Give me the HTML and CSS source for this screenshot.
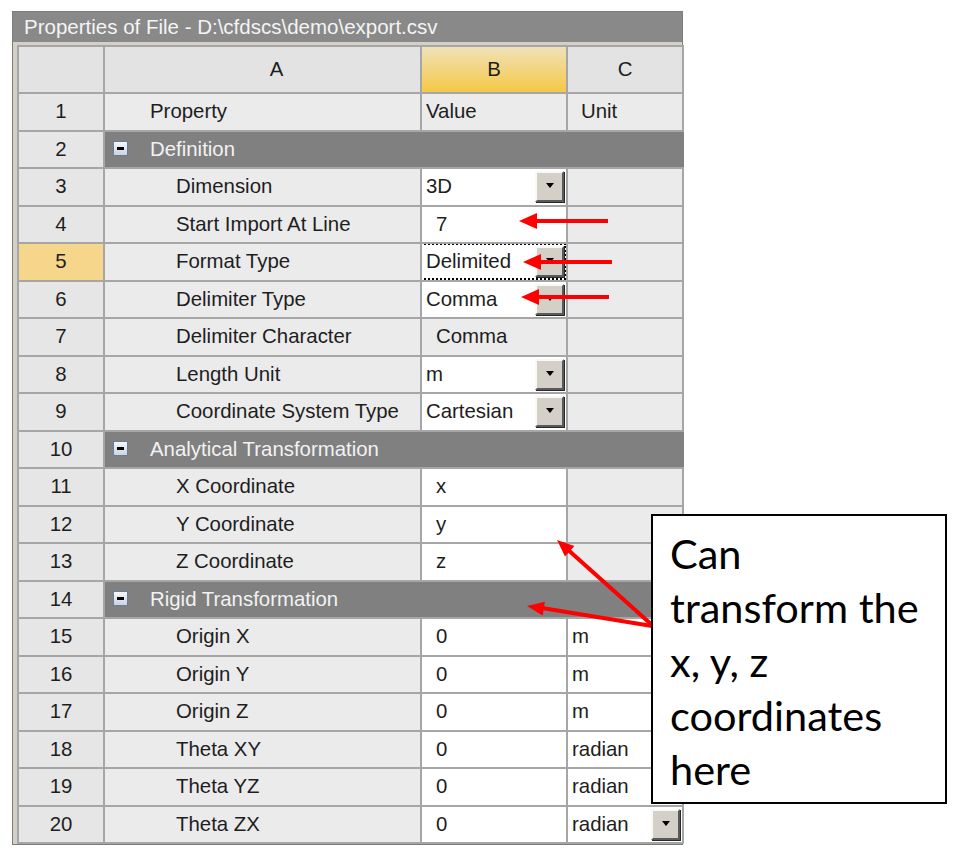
FILE: index.html
```html
<!DOCTYPE html>
<html lang="en">
<head>
  <meta charset="UTF-8">
  <title>Properties of File</title>
  <link rel="stylesheet" href="styles.css">
</head>
<body>

  <div class="window">
    <div class="titlebar">Properties of File - D:\cfdscs\demo\export.csv</div>
    <div class="sheet">
      <table class="grid">
        <colgroup>
          <col class="c-num">
          <col class="c-a">
          <col class="c-b">
          <col class="c-c">
        </colgroup>
        <tr class="head">
          <td class="num"></td>
          <td class="hd col-a">A</td>
          <td class="hd sel">B</td>
          <td class="hd">C</td>
        </tr>
        <tr>
          <td class="num">1</td>
          <td class="prop top">Property</td>
          <td class="ro"><div class="val">Value</div></td>
          <td class="ro"><div class="unit pad">Unit</div></td>
        </tr>
        <tr class="group">
          <td class="num">2</td>
          <td colspan="3" class="grp"><span class="minus"></span>Definition</td>
        </tr>
        <tr>
          <td class="num">3</td>
          <td class="prop">Dimension</td>
          <td class="edit"><div class="val">3D<span class="dd"></span></div></td>
          <td class="ro"></td>
        </tr>
        <tr>
          <td class="num">4</td>
          <td class="prop">Start Import At Line</td>
          <td class="edit"><div class="val txt">7</div></td>
          <td class="ro"></td>
        </tr>
        <tr>
          <td class="num active">5</td>
          <td class="prop">Format Type</td>
          <td class="edit"><div class="val focus">Delimited<span class="dd"></span></div></td>
          <td class="ro"></td>
        </tr>
        <tr>
          <td class="num">6</td>
          <td class="prop">Delimiter Type</td>
          <td class="edit"><div class="val">Comma<span class="dd"></span></div></td>
          <td class="ro"></td>
        </tr>
        <tr>
          <td class="num">7</td>
          <td class="prop">Delimiter Character</td>
          <td class="ro"><div class="val txt">Comma</div></td>
          <td class="ro"></td>
        </tr>
        <tr>
          <td class="num">8</td>
          <td class="prop">Length Unit</td>
          <td class="edit"><div class="val">m<span class="dd"></span></div></td>
          <td class="ro"></td>
        </tr>
        <tr>
          <td class="num">9</td>
          <td class="prop">Coordinate System Type</td>
          <td class="edit"><div class="val">Cartesian<span class="dd"></span></div></td>
          <td class="ro"></td>
        </tr>
        <tr class="group">
          <td class="num">10</td>
          <td colspan="3" class="grp"><span class="minus"></span>Analytical Transformation</td>
        </tr>
        <tr>
          <td class="num">11</td>
          <td class="prop">X Coordinate</td>
          <td class="edit"><div class="val txt">x</div></td>
          <td class="ro"></td>
        </tr>
        <tr>
          <td class="num">12</td>
          <td class="prop">Y Coordinate</td>
          <td class="edit"><div class="val txt">y</div></td>
          <td class="ro"></td>
        </tr>
        <tr>
          <td class="num">13</td>
          <td class="prop">Z Coordinate</td>
          <td class="edit"><div class="val txt">z</div></td>
          <td class="ro"></td>
        </tr>
        <tr class="group">
          <td class="num">14</td>
          <td colspan="3" class="grp"><span class="minus"></span>Rigid Transformation</td>
        </tr>
        <tr>
          <td class="num">15</td>
          <td class="prop">Origin X</td>
          <td class="edit"><div class="val txt">0</div></td>
          <td class="edit"><div class="unit">m<span class="dd"></span></div></td>
        </tr>
        <tr>
          <td class="num">16</td>
          <td class="prop">Origin Y</td>
          <td class="edit"><div class="val txt">0</div></td>
          <td class="edit"><div class="unit">m<span class="dd"></span></div></td>
        </tr>
        <tr>
          <td class="num">17</td>
          <td class="prop">Origin Z</td>
          <td class="edit"><div class="val txt">0</div></td>
          <td class="edit"><div class="unit">m<span class="dd"></span></div></td>
        </tr>
        <tr>
          <td class="num">18</td>
          <td class="prop">Theta XY</td>
          <td class="edit"><div class="val txt">0</div></td>
          <td class="edit"><div class="unit">radian<span class="dd"></span></div></td>
        </tr>
        <tr>
          <td class="num">19</td>
          <td class="prop">Theta YZ</td>
          <td class="edit"><div class="val txt">0</div></td>
          <td class="edit"><div class="unit">radian<span class="dd"></span></div></td>
        </tr>
        <tr>
          <td class="num">20</td>
          <td class="prop">Theta ZX</td>
          <td class="edit"><div class="val txt">0</div></td>
          <td class="edit"><div class="unit">radian<span class="dd"></span></div></td>
        </tr>
      </table>
    </div>
  </div>

  <svg class="arrows" width="958" height="861" viewBox="0 0 958 861">
    <g stroke="#ff0000" stroke-width="4" fill="none">
      <line x1="608" y1="221" x2="532" y2="221"/>
      <line x1="612" y1="262" x2="536" y2="262"/>
      <line x1="609" y1="297" x2="534" y2="297"/>
      <line x1="652" y1="625" x2="566" y2="548"/>
      <line x1="652" y1="626" x2="542" y2="608"/>
    </g>
    <g fill="#ff0000">
      <polygon points="519,221 537,213 537,229"/>
      <polygon points="523,262 541,254 541,270"/>
      <polygon points="521,297 539,289 539,305"/>
      <polygon points="557,540 565,556.5 574.4,546.1"/>
      <polygon points="527,606 542.7,615.6 544.9,601.8"/>
    </g>
  </svg>

  <div class="callout">Can<br>transform the<br>x, y, z<br>coordinates<br>here</div>

</body>
</html>
```

FILE: styles.css
```css
body {
  margin: 0;
  background-color: #fff;
  font-family: 'Liberation Sans', Arial, sans-serif;
  color: #1e1e1e;
}

.window {
  margin: 11px 0 0 12px;
  width: 669px;
  border: 1px solid #7c7c7c;
  background-color: #d4d0c8;
}

.titlebar {
  height: 30px;
  line-height: 30px;
  background-color: #898989;
  color: #f4f4f4;
  font-size: 20.5px;
  padding-left: 11px;
  white-space: nowrap;
}

.sheet {
  padding: 3px 0 0 4px;
}

.grid {
  border-collapse: collapse;
  table-layout: fixed;
  width: 665px;
  font-size: 20.4px;
  background-color: #ebebeb;
}

.c-num { width: 86px; }
.c-a { width: 317px; }
.c-b { width: 146px; }
.c-c { width: 116px; }

.grid td {
  border: 2px solid #a6a6a6;
  height: 35.5px;
  padding: 0;
  white-space: nowrap;
  vertical-align: middle;
}

.grid tr.head td {
  height: 45px;
  background-color: #e3e3e3;
}

.grid td.hd {
  text-align: center;
}

.grid td.col-a {
  padding-left: 28px;
}

.grid td.sel {
  background: linear-gradient(#efe2b9, #f5c845);
}

.grid td.num {
  text-align: center;
  background-color: #e6e6e6;
}

.grid td.active {
  background-color: #f5d68a;
}

.prop {
  padding-left: 71px !important;
}

.prop.top {
  padding-left: 45px !important;
}

.grid td.grp {
  background-color: #808080;
  color: #f2f2f2;
  border-left-color: #a6a6a6;
  border-right-color: #808080;
  padding-left: 8px;
}

.minus {
  display: inline-block;
  vertical-align: middle;
  width: 13px;
  height: 13px;
  margin: -3px 22px 0 0;
  border: 1px solid #6a7b98;
  background: linear-gradient(#f4f6fa, #cdd4e0);
  position: relative;
}

.minus::after {
  content: "";
  position: absolute;
  left: 3px;
  top: 5px;
  width: 7px;
  height: 3px;
  background-color: #000;
}

.grid td.edit {
  background-color: #fff;
}

.val, .unit {
  display: flex;
  align-items: center;
  justify-content: space-between;
  height: 35px;
  padding-left: 4px;
  padding-right: 2px;
}

.val.txt {
  padding-left: 14px;
}

.unit.pad {
  padding-left: 13px;
}

.val.focus {
  height: 33px;
  margin: -1px 0 -1px -2px;
  padding-left: 4px;
  border: 2px dotted #000;
}

.dd {
  display: block;
  position: relative;
  width: 25px;
  height: 27px;
  background-color: #d4d0c8;
  border-top: 2px solid #f8f8f8;
  border-left: 2px solid #f8f8f8;
  border-right: 2px solid #5a5a5a;
  border-bottom: 2px solid #5a5a5a;
  box-shadow: 1px 1px 0 #2a2a2a;
}

.val.focus .dd {
  margin-right: -2px;
}

.dd::after {
  content: "";
  position: absolute;
  left: 9px;
  top: 10px;
  border-left: 4px solid transparent;
  border-right: 4px solid transparent;
  border-top: 5px solid #000;
}

.arrows {
  position: absolute;
  top: 0;
  left: 0;
  pointer-events: none;
}

.callout {
  position: absolute;
  left: 651px;
  top: 514px;
  width: 275px;
  height: 270px;
  padding: 10px 0 6px 17px;
  border: 2px solid #000;
  background-color: #fff;
  font-family: Lato, 'Open Sans', sans-serif;
  font-size: 41.5px;
  line-height: 54px;
  color: #000;
}
```
